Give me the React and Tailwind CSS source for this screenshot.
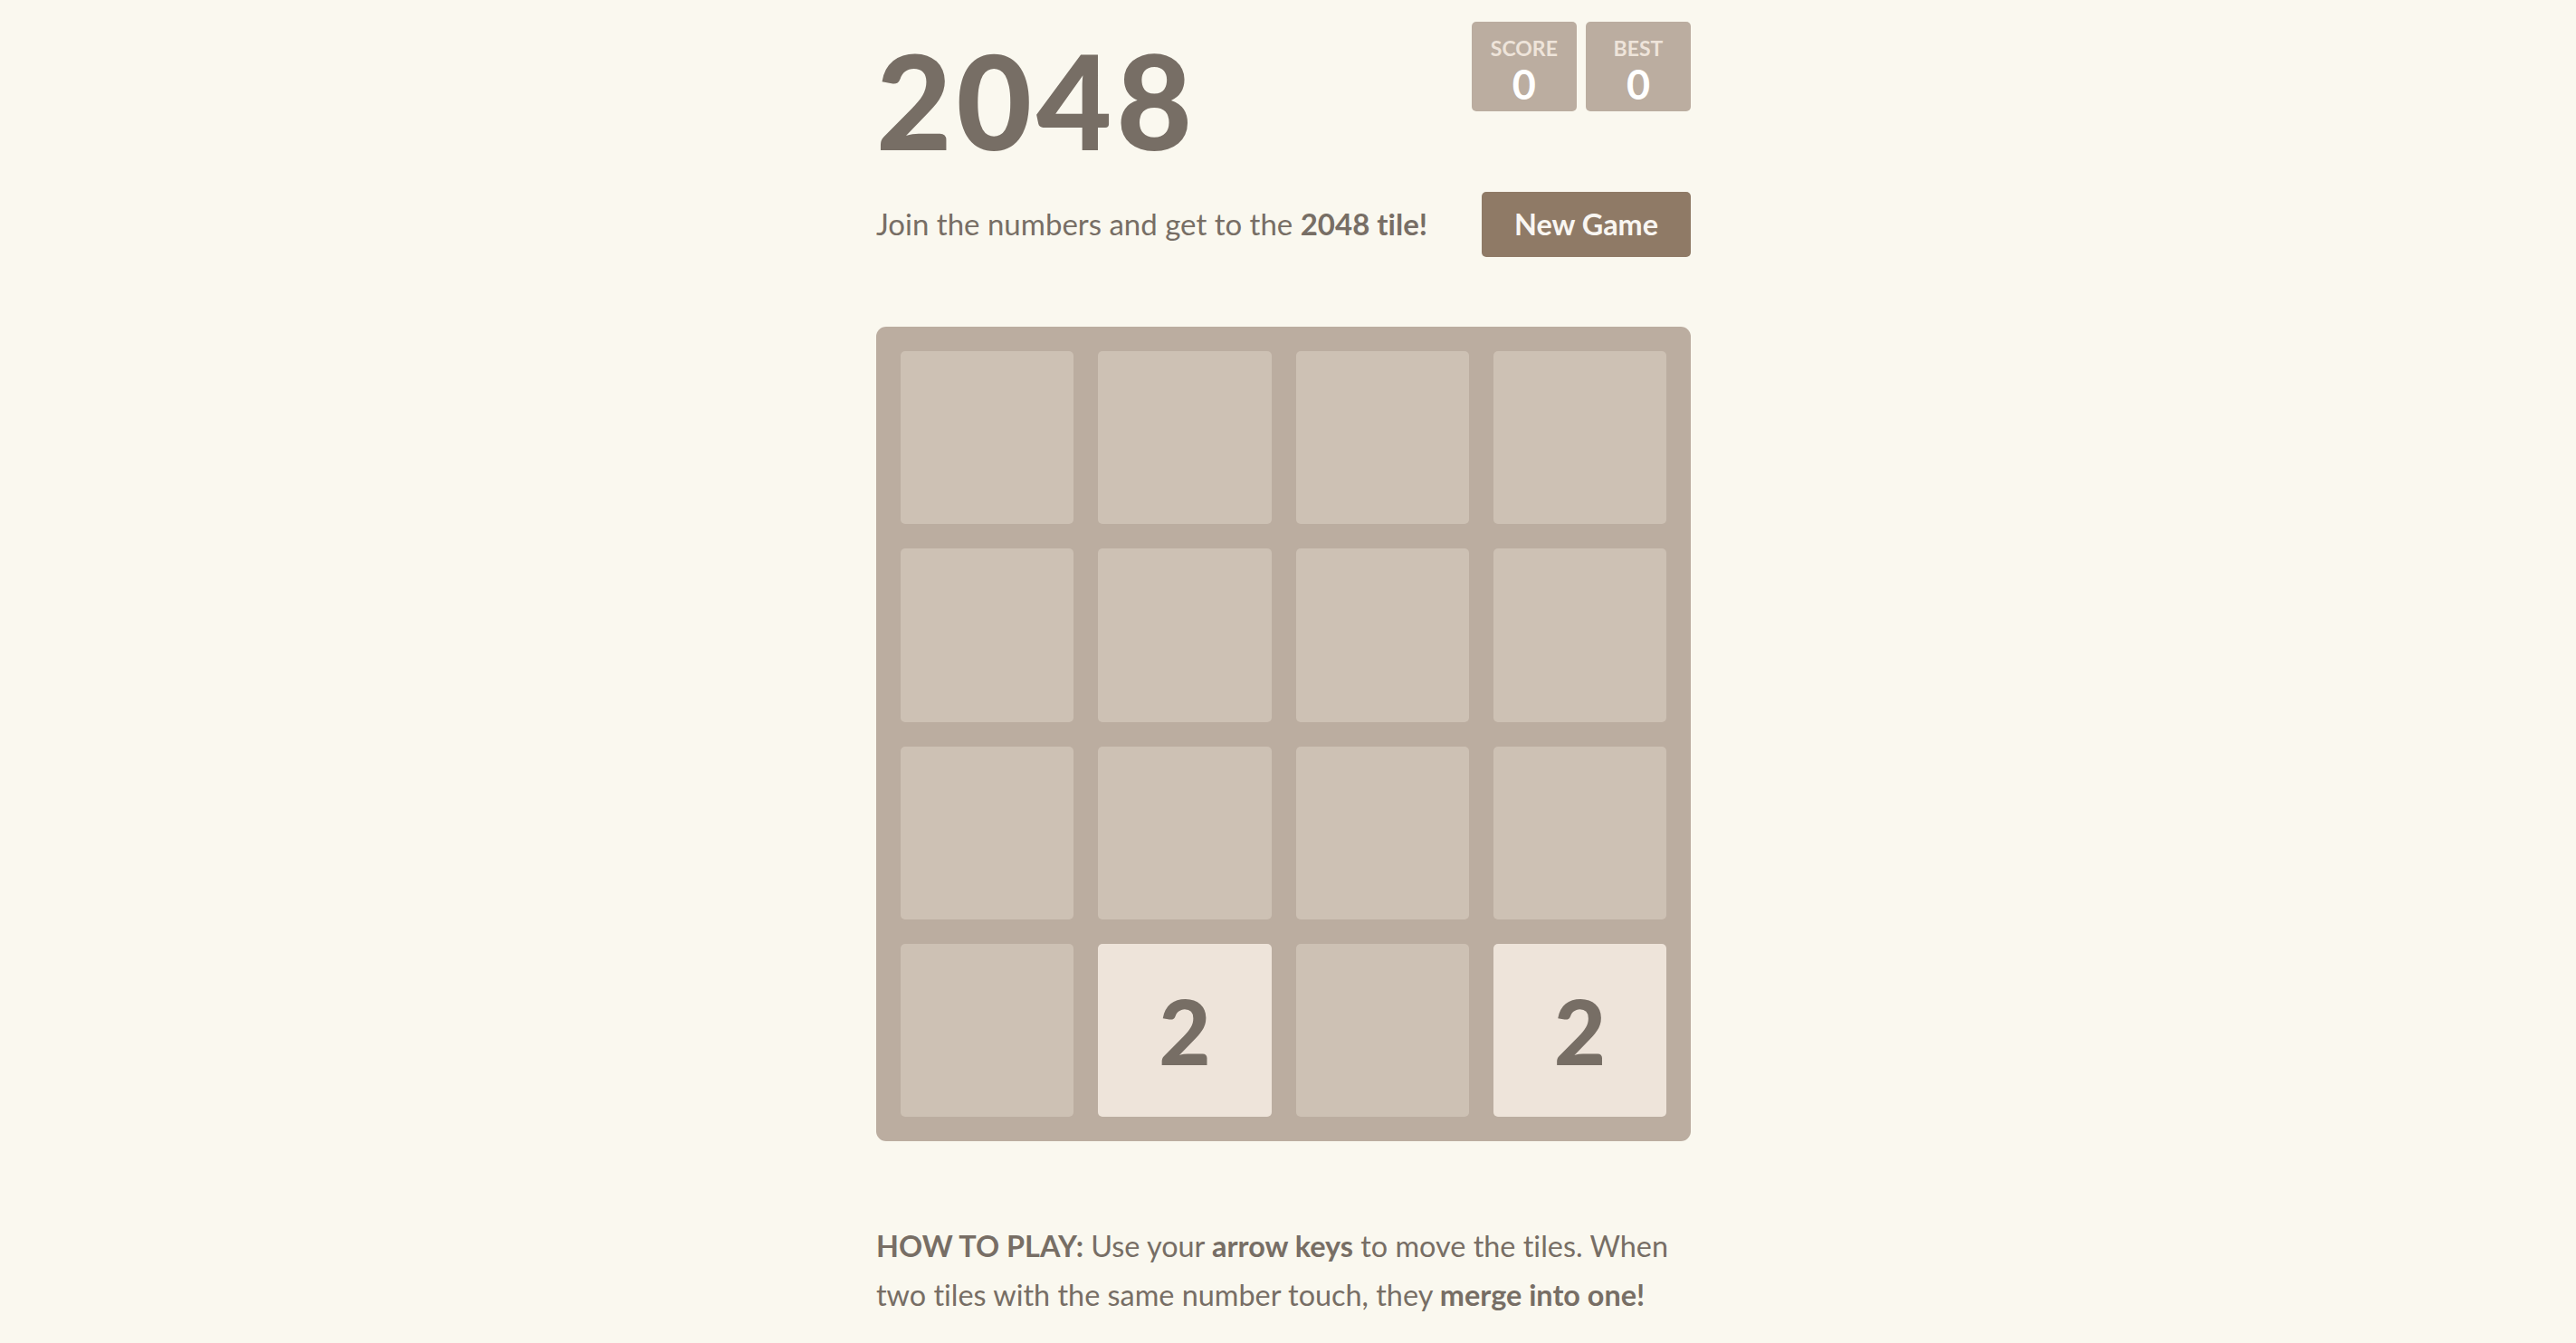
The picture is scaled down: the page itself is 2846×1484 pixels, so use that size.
import React, { useState } from "react";

const font = { fontFamily: "Lato, 'Open Sans', sans-serif" };

// starting board: two "2" tiles on the bottom row
const START = [
  [0, 0, 0, 0],
  [0, 0, 0, 0],
  [0, 0, 0, 0],
  [0, 2, 0, 2],
];

function ScoreBox({ label, value }) {
  // the label sits over the box, so only the value sets its width
  return (
    <div className="relative h-[99px] px-[45px] bg-[#bbada0] rounded-[5px] text-center">
      <div className="absolute inset-x-0 top-[18px] text-[23px] leading-[23px] font-bold uppercase text-[#eee4da]">
        {label}
      </div>
      <div className="pt-[47px] text-[45px] leading-[45px] font-bold text-white">{value}</div>
    </div>
  );
}

function Cell({ value }) {
  if (!value) {
    return <div className="aspect-square rounded-[5px] bg-[#cdc1b4]" />;
  }
  return (
    <div className="aspect-square rounded-[5px] bg-[#eee4da] flex items-center justify-center">
      <span className="text-[99px] leading-none font-black text-[#776e65]">{value}</span>
    </div>
  );
}

export default function App() {
  const [grid] = useState(START);
  const [score] = useState(0);
  const [best] = useState(0);

  return (
    <div
      className="min-h-screen w-full bg-[#faf8ef] flex justify-center pr-[10px] [font-variant-ligatures:none]"
      style={font}
    >
      <div className="w-[900px] text-[#776e65]">
        {/* heading */}
        <div className="flex justify-between items-start">
          <h1 className="mt-[39px] text-[144px] leading-none font-black tracking-[5px]">2048</h1>
          <div className="mt-[24px] flex gap-[10px]">
            <ScoreBox label="Score" value={score} />
            <ScoreBox label="Best" value={best} />
          </div>
        </div>

        {/* intro + new game */}
        <div className="mt-[29px] flex justify-between items-center">
          <p className="text-[33px] leading-[53.5px]">
            Join the numbers and get to the <strong className="font-bold">2048 tile!</strong>
          </p>
          <button className="h-[72px] px-[36px] rounded-[5px] bg-[#8f7a66] text-[#f9f6f2] text-[32.4px] font-bold">
            New Game
          </button>
        </div>

        {/* board */}
        <div className="mt-[77px] w-[900px] h-[900px] bg-[#bbada0] rounded-[11px] p-[27px] grid grid-cols-4 gap-[27px]">
          {grid.flat().map((v, i) => (
            <Cell key={i} value={v} />
          ))}
        </div>

        <p className="mt-[89px] text-[32.4px] leading-[53.5px]">
          <strong className="font-bold">HOW TO PLAY:</strong> Use your{" "}
          <strong className="font-bold">arrow keys</strong> to move the tiles. When two tiles with
          the same number touch, they <strong className="font-bold">merge into one!</strong>
        </p>
      </div>
    </div>
  );
}
